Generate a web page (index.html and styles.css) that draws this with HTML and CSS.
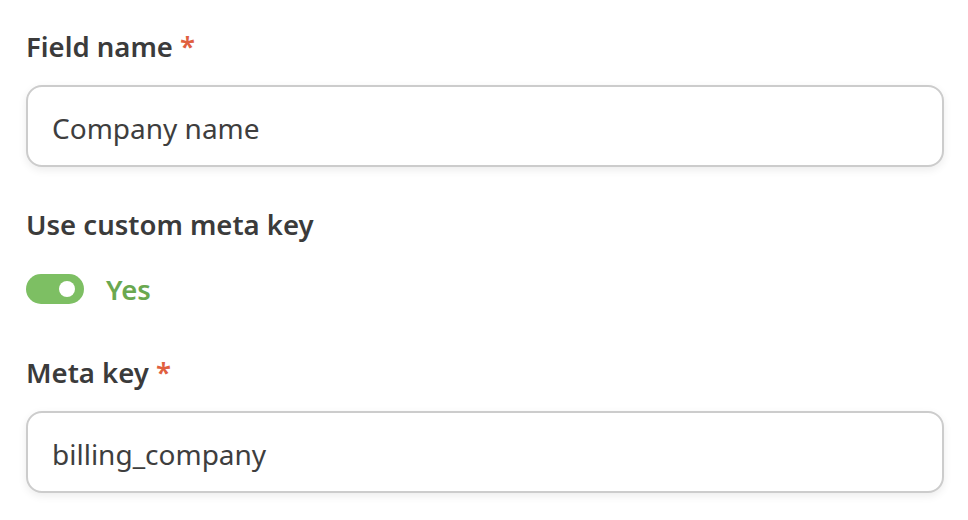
FILE: index.html
```html
<!DOCTYPE html>
<html lang="en">

<head>
    <meta charset="UTF-8">
    <title>Field settings</title>
    <link rel="stylesheet" href="styles.css">
</head>

<body>
    <form class="field-form">
        <div class="form-group">
            <label for="fieldName">Field name <span class="required">*</span></label>
            <input type="text" id="fieldName" value="Company name">
        </div>
        <div class="form-group">
            <label>Use custom meta key</label>
            <div class="toggle-row">
                <span class="toggle on"><span class="knob"></span></span>
                <span class="toggle-text">Yes</span>
            </div>
        </div>
        <div class="form-group">
            <label for="metaKey">Meta key <span class="required">*</span></label>
            <input type="text" id="metaKey" value="billing_company">
        </div>
    </form>
</body>

</html>
```

FILE: styles.css
```css
body {
    font-family: "Noto Sans", "Open Sans", sans-serif;
    background: #ffffff;
    color: #3b3b3b;
    margin: 0;
}

.field-form {
    padding: 27px 24px 0 26px;
}

.form-group {
    margin-bottom: 38px;
}

label {
    display: block;
    font-size: 27.5px;
    font-weight: 600;
    line-height: 40px;
    margin-bottom: 18px;
}

.required {
    color: #e0603f;
}

input {
    display: block;
    width: 100%;
    height: 82px;
    padding: 4px 24px 0;
    font-family: inherit;
    font-size: 28px;
    color: #3e3e3e;
    border: 2px solid #cccccc;
    border-radius: 16px;
    box-shadow: 0 3px 8px rgba(0, 0, 0, 0.08);
    box-sizing: border-box;
    outline: none;
}

.toggle-row {
    display: flex;
    align-items: center;
    gap: 22px;
    height: 52px;
}

.toggle {
    display: flex;
    align-items: center;
    justify-content: flex-end;
    width: 58px;
    height: 30px;
    padding: 0 9px;
    border-radius: 15px;
    background: #7dbf63;
    box-sizing: border-box;
}

.knob {
    width: 16px;
    height: 16px;
    border-radius: 50%;
    background: #ffffff;
}

.toggle-text {
    font-size: 27.5px;
    font-weight: 600;
    color: #6aa84f;
}
```
